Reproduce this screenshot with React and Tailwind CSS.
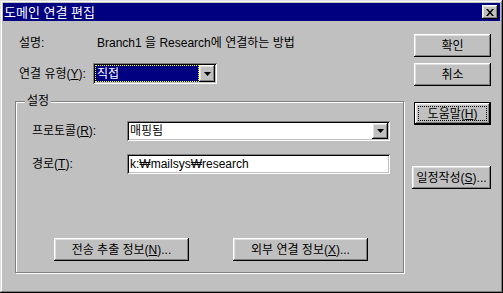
import React from 'react';

// Win95-style bevels
const raised =
  'shadow-[inset_-1px_-1px_#000,inset_1px_1px_#fff,inset_-2px_-2px_#808080,inset_2px_2px_#dfdfdf]';
const sunken =
  'shadow-[inset_1px_1px_#808080,inset_-1px_-1px_#fff,inset_2px_2px_#000,inset_-2px_-2px_#c0c0c0]';

function Button({ className = '', children }) {
  return (
    <button
      type="button"
      className={`flex items-center justify-center bg-[#c0c0c0] h-[23px] leading-none ${raised} ${className}`}
    >
      {children}
    </button>
  );
}

function Arrow() {
  return (
    <svg width="7" height="4" viewBox="0 0 7 4">
      <path d="M0 0h7L3.5 4z" fill="#000" />
    </svg>
  );
}

function DropButton({ className = '' }) {
  return (
    <div className={`w-[16px] flex items-center justify-center bg-[#c0c0c0] ${raised} ${className}`}>
      <Arrow />
    </div>
  );
}

function Mn({ children }) {
  return <u className="underline-offset-[1px]">{children}</u>;
}

export default function App() {
  return (
    <div className="w-[503px] h-[293px] bg-[#c0c0c0] p-[3px] flex flex-col text-black text-[12px] font-['Liberation_Sans','Noto_Sans_CJK_KR',sans-serif] shadow-[inset_-1px_-1px_#000,inset_1px_1px_#dfdfdf,inset_-2px_-2px_#808080,inset_2px_2px_#fff]">
      {/* title bar */}
      <div className="h-[18px] bg-[#000080] flex items-center pl-[1px] pr-[2px]">
        <span className="text-white text-[13px] leading-none">도메인 연결 편집</span>
        <div className={`ml-auto w-[16px] h-[14px] bg-[#c0c0c0] flex items-center justify-center ${raised}`}>
          <svg width="8" height="7" viewBox="0 0 8 7">
            <path d="M0 0h2l2 2.5L6 0h2L5 3.5 8 7H6L4 4.5 2 7H0l3-3.5z" fill="#000" />
          </svg>
        </div>
      </div>

      <div className="flex flex-1">
        {/* left column */}
        <div className="w-[409px] pl-[12px]">
          <div className="mt-[14px] h-[16px] pl-[4px] flex items-center">
            <span className="w-[78px]">설명:</span>
            <span>Branch1 을 Research에 연결하는 방법</span>
          </div>

          <div className="mt-[12px] pl-[4px] flex items-center">
            <span className="w-[74px]">
              연결 유형(<Mn>Y</Mn>):
            </span>
            <div className={`w-[124px] h-[21px] bg-white p-[2px] flex ${sunken}`}>
              <div className="flex-1 bg-[#000080] border border-dotted border-[#ffff00] text-white flex items-center pl-[1px]">
                직접
              </div>
              <DropButton />
            </div>
          </div>

          <div className="relative mt-[17px] w-[389px] h-[172px] border border-[#808080] shadow-[inset_1px_1px_#fff,1px_1px_#fff] pt-[19px] pl-[16px] pb-[11px]">
            <span className="absolute left-[9px] top-[-8px] bg-[#c0c0c0] px-[2px] leading-[14px]">설정</span>

            <div className="flex items-center">
              <span className="w-[95px]">
                프로토콜(<Mn>R</Mn>):
              </span>
              <div className={`w-[263px] h-[20px] bg-white p-[2px] flex ${sunken}`}>
                <div className="flex-1 flex items-center pl-[1px]">매핑됨</div>
                <DropButton />
              </div>
            </div>

            <div className="mt-[13px] flex items-center">
              <span className="w-[95px]">
                경로(<Mn>T</Mn>):
              </span>
              <div className={`w-[263px] h-[20px] bg-white px-[3px] flex items-center ${sunken}`}>
                k:₩mailsys₩research
              </div>
            </div>

            <div className="mt-[64px] ml-[22px] flex gap-[44px]">
              <Button className="w-[135px]">
                전송 추출 정보(<Mn>N</Mn>)...
              </Button>
              <Button className="w-[135px]">
                외부 연결 정보(<Mn>X</Mn>)...
              </Button>
            </div>
          </div>
        </div>

        {/* right column */}
        <div className="flex-1 flex flex-col items-end pr-[9px]">
          <Button className="mt-[13px] w-[77px]">확인</Button>
          <Button className="mt-[6px] w-[77px]">취소</Button>
          <div className="mt-[16px] w-[77px] h-[23px] border border-black">
            <div className={`h-full bg-[#c0c0c0] p-[3px] ${raised}`}>
              <div className="h-full border border-dotted border-black flex items-center justify-center leading-none">
                도움말(<Mn>H</Mn>)
              </div>
            </div>
          </div>
          <Button className="mt-[41px] w-[79px]">
            일정작성(<Mn>S</Mn>)...
          </Button>
        </div>
      </div>
    </div>
  );
}
